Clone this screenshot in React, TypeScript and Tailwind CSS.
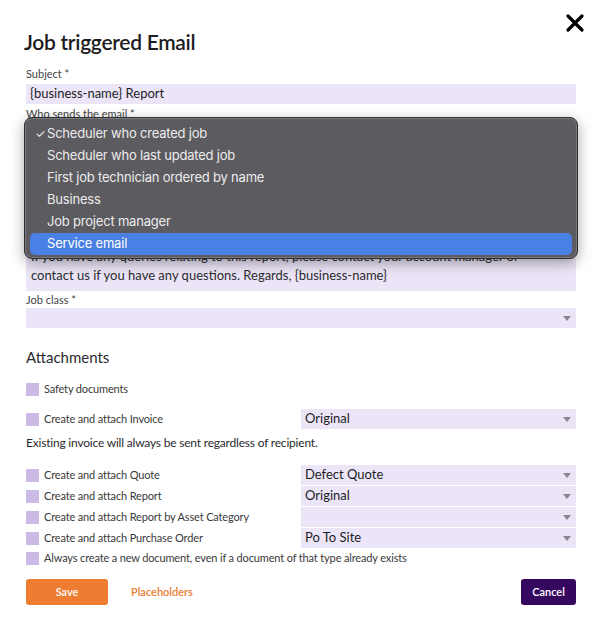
import React from 'react';

const jost = { fontFamily: 'Lato, "Open Sans", sans-serif' };

function Caret() {
  return (
    <svg width="8" height="5" viewBox="0 0 8 5" className="shrink-0">
      <path d="M0 0 L8 0 L4 5 Z" fill="#8a8690" />
    </svg>
  );
}

function SelectBox({ value }: { value?: string }) {
  return (
    <div className="flex h-[20px] items-center justify-between bg-[#ece5f7] pl-[4px] pr-[5px] text-[13px] text-[#1d1d1f]">
      <span>{value}</span>
      <Caret />
    </div>
  );
}

function Check() {
  return <span className="h-[13px] w-[13px] shrink-0 bg-[#cbb9e6]" />;
}

function AttachRow({ label, value, hasSelect = true }: { label: string; value?: string; hasSelect?: boolean }) {
  return (
    <div className="flex h-[20px] items-center">
      <div className="flex w-[275px] items-center gap-[5px] text-[11px] tracking-[-0.15px] text-[#3a3a3a]">
        <Check />
        <span>{label}</span>
      </div>
      {hasSelect && (
        <div className="flex-1">
          <SelectBox value={value} />
        </div>
      )}
    </div>
  );
}

const senderOptions = [
  'Scheduler who created job',
  'Scheduler who last updated job',
  'First job technician ordered by name',
  'Business',
  'Job project manager',
  'Service email',
];

export default function App() {
  return (
    <div className="relative h-[630px] w-[602px] overflow-hidden bg-white px-[26px] pt-[28px]" style={jost}>
      <button className="absolute right-[17px] top-[13px] text-black" aria-label="Close">
        <svg width="20" height="20" viewBox="0 0 20 20">
          <path d="M3 3 L17 17 M17 3 L3 17" stroke="#000" strokeWidth="3.2" strokeLinecap="round" />
        </svg>
      </button>

      <h1 className="-ml-[2px] text-[21px] font-semibold leading-[28px] tracking-[-0.3px] text-[#1c1c22]">Job triggered Email</h1>

      <div className="mt-[11px] text-[11px] leading-[14px] text-[#444]">Subject *</div>
      <div className="mt-[3px] flex h-[20px] items-center bg-[#ece5f7] px-[4px] text-[13px] text-[#1d1d1f]">
        {'{business-name}'} Report
      </div>

      <div className="relative">
        <div className="mt-[3px] text-[11px] leading-[14px] text-[#444]">Who sends the email *</div>
        <div className="mt-[2px]">
          <SelectBox />
        </div>
        <div className="mt-[4px] text-[11px] leading-[14px] text-[#444]">Message *</div>
        <div className="mt-[1px] h-[129px] overflow-hidden bg-[#ece5f7] px-[5px] pt-[2px] text-[13px] leading-[19px] text-[#2a2a2e]">
          <div className="flex h-full flex-col justify-end pb-[6px]">
            <p>If you have any queries relating to this report, please contact your account manager or</p>
            <p>contact us if you have any questions. Regards, {'{business-name}'}</p>
          </div>
        </div>

        <div
          className="absolute -left-[2px] top-[10px] z-10 w-[554px] rounded-[8px] border border-[#2f2f31] bg-[#5c5b60] p-[5px] pb-[3px] shadow-[0_4px_14px_rgba(0,0,0,0.35),inset_0_0_0_1px_rgba(255,255,255,0.18)]"
          style={{ fontFamily: 'Inter, "Liberation Sans", sans-serif' }}
        >
          {senderOptions.map((opt, i) => (
            <div
              key={opt}
              className={`relative flex h-[22px] items-center rounded-[5px] pl-[17px] text-[13px] tracking-[-0.2px] ${
                i === senderOptions.length - 1 ? 'bg-[#4a80e5] text-white' : 'text-[#ececec]'
              }`}
            >
              {i === 0 && <span className="absolute left-[5px] text-[12px]">✓</span>}
              {opt}
            </div>
          ))}
        </div>
      </div>

      <div className="mt-[2px] text-[11px] leading-[14px] text-[#444]">Job class *</div>
      <div className="mt-[1px]">
        <SelectBox />
      </div>

      <h2 className="mt-[19px] text-[15px] leading-[20px] text-[#2a2a2e]">Attachments</h2>

      <div className="mt-[12px]">
        <AttachRow label="Safety documents" hasSelect={false} />
      </div>
      <div className="mt-[10px]">
        <AttachRow label="Create and attach Invoice" value="Original" />
      </div>
      <p className="mt-[6px] text-[12px] leading-[16px] tracking-[-0.2px] text-[#2a2a2e]">
        Existing invoice will always be sent regardless of recipient.
      </p>

      <div className="mt-[14px] flex flex-col gap-[1px]">
        <AttachRow label="Create and attach Quote" value="Defect Quote" />
        <AttachRow label="Create and attach Report" value="Original" />
        <AttachRow label="Create and attach Report by Asset Category" />
        <AttachRow label="Create and attach Purchase Order" value="Po To Site" />
        <div className="flex h-[18px] items-center gap-[5px] text-[11px] tracking-[-0.15px] text-[#3a3a3a]">
          <Check />
          <span>Always create a new document, even if a document of that type already exists</span>
        </div>
      </div>

      <div className="mt-[12px] flex items-center justify-between">
        <div className="flex items-center gap-[23px]">
          <button className="h-[26px] w-[82px] rounded-[3px] bg-[#ee7d31] text-[11px] font-semibold text-white">Save</button>
          <button className="text-[11px] font-semibold text-[#ee7d31]">Placeholders</button>
        </div>
        <button className="h-[26px] w-[55px] rounded-[3px] bg-[#36075f] text-[11px] font-semibold text-white">Cancel</button>
      </div>
    </div>
  );
}
